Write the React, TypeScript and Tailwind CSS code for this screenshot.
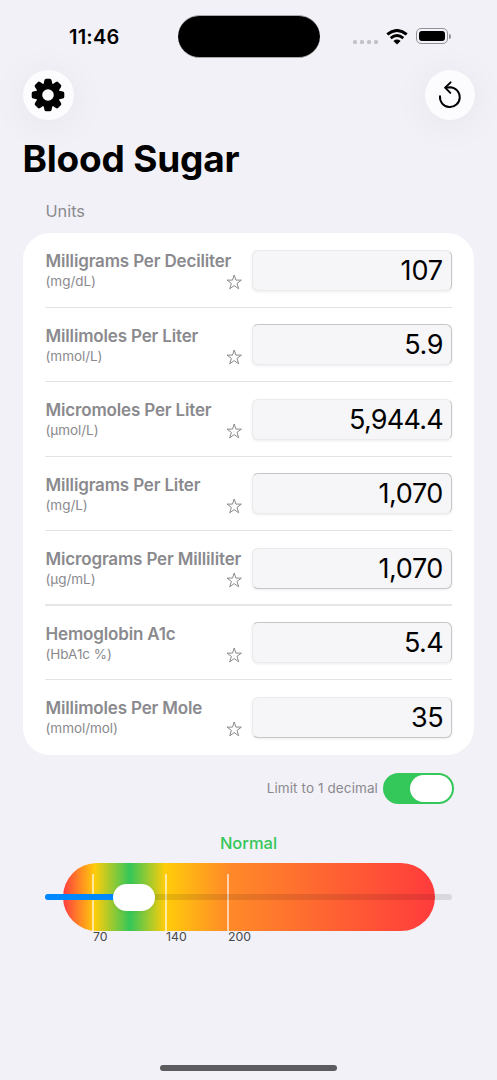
import React from "react";

type Unit = {
  name: string;
  symbol: string;
  value: string;
  tracking: string;
  edge: string;
  divider: string;
};

const units: Unit[] = [
  {
    name: "Milligrams Per Deciliter",
    symbol: "(mg/dL)",
    value: "107",
    tracking: "tracking-[-0.1px]",
    edge: "",
    divider: "border-b border-[#e3e3e5]",
  },
  {
    name: "Millimoles Per Liter",
    symbol: "(mmol/L)",
    value: "5.9",
    tracking: "tracking-[-0.4px]",
    edge: "border-t-[#c6c6c8]",
    divider: "border-b border-[#e3e3e5]",
  },
  {
    name: "Micromoles Per Liter",
    symbol: "(µmol/L)",
    value: "5,944.4",
    tracking: "tracking-[-0.75px]",
    edge: "",
    divider: "border-b border-[#e3e3e5]",
  },
  {
    name: "Milligrams Per Liter",
    symbol: "(mg/L)",
    value: "1,070",
    tracking: "tracking-[-0.4px]",
    edge: "border-t-[#c6c6c8]",
    divider: "border-b border-[#e3e3e5]",
  },
  {
    name: "Micrograms Per Milliliter",
    symbol: "(µg/mL)",
    value: "1,070",
    tracking: "tracking-[-0.4px]",
    edge: "border-b-[#c6c6c8]",
    divider: "border-b-2 border-[#e6e6e8]",
  },
  {
    name: "Hemoglobin A1c",
    symbol: "(HbA1c %)",
    value: "5.4",
    tracking: "tracking-[-0.6px]",
    edge: "border-t-[#c6c6c8]",
    divider: "border-b border-[#e3e3e5]",
  },
  {
    name: "Millimoles Per Mole",
    symbol: "(mmol/mol)",
    value: "35",
    tracking: "tracking-[-0.6px]",
    edge: "border-b-[#c6c6c8]",
    divider: "",
  },
];

const marks = [
  { label: "70", x: 29 },
  { label: "140", x: 102 },
  { label: "200", x: 164 },
];

function GearIcon() {
  return (
    <svg className="-ml-px" width="34" height="34" viewBox="-17 -17 34 34">
      {[0, 45, 90, 135, 180, 225, 270, 315].map((angle) => (
        <path
          key={angle}
          d="M-4.6 -10 L-3.6 -14.8 Q-3.3 -16.3 -1.8 -16.3 H1.8 Q3.3 -16.3 3.6 -14.8 L4.6 -10 Z"
          transform={`rotate(${angle})`}
        />
      ))}
      <circle r="8.9" fill="none" stroke="black" strokeWidth="6.2" />
    </svg>
  );
}

function ResetIcon() {
  return (
    <svg
      width="26"
      height="30"
      viewBox="0 0 26 30"
      fill="none"
      stroke="black"
      strokeWidth="2"
      strokeLinecap="round"
      strokeLinejoin="round"
    >
      <path d="M3 16.2A9.9 9.9 0 1 0 13 7.3L8.5 7.7" />
      <path d="M13.6 2.4L8.2 7.6L13.3 12.9" />
    </svg>
  );
}

function WifiIcon() {
  return (
    <svg width="22" height="16" viewBox="0 0 22 16" fill="none" stroke="black">
      <path d="M1.3 5.4Q11 -2.4 20.7 5.4" strokeWidth="3" />
      <path d="M4.7 9.1Q11 4 17.3 9.1" strokeWidth="2.8" />
      <path d="M11 15.6L7.4 12Q11 9.2 14.6 12Z" fill="black" stroke="none" />
    </svg>
  );
}

function StarIcon() {
  return (
    <svg width="16" height="16" viewBox="0 0 16 16" fill="none" stroke="#8a8a8e" strokeWidth="1">
      <path
        d="M8.2 1L9.9 6.1L15.4 6.1L11 9.4L12.7 14.8L8.2 11.6L3.7 14.8L5.4 9.4L1 6.1L6.5 6.1Z"
        strokeLinejoin="round"
      />
    </svg>
  );
}

function StatusBar() {
  return (
    <div className="flex h-[70px] pt-[15px]">
      <div className="w-[177.5px] pl-[69px] pt-[8px] text-[20px] leading-7 font-semibold tracking-[0.2px]">
        11:46
      </div>
      <div className="h-[43px] w-[142px] rounded-full border-y border-[#aaa] bg-black" />
      <div className="flex pl-[33.5px]">
        <div className="flex gap-[3px] pt-[25px]">
          {[0, 1, 2, 3].map((dot) => (
            <div key={dot} className="h-1 w-1 rounded-[1.5px] bg-[#c3c2c7]" />
          ))}
        </div>
        <div className="pl-[8px] pt-[13.5px]">
          <WifiIcon />
        </div>
        <div className="flex items-start pl-[8px] pt-[13px]">
          <div className="h-4 w-8 rounded-[5px] border border-[#929196] p-[2px]">
            <div className="h-full rounded-[3px] bg-black" />
          </div>
          <div className="ml-px mt-[5.5px] h-[5px] w-[2px] rounded-r-full bg-[#929196]" />
        </div>
      </div>
    </div>
  );
}

function UnitRow({ unit }: { unit: Unit }) {
  return (
    <div className={`mx-[22px] flex h-[74.5px] pt-[17px] ${unit.divider}`}>
      <div className="w-[207px] text-[#8a8a8e]">
        <div className="whitespace-nowrap pl-[0.5px] text-[17px] leading-[22px] font-semibold tracking-[-0.16px]">
          {unit.name}
        </div>
        <div className="flex justify-between pr-[10px]">
          <span className="pl-[0.5px] text-[13.5px] leading-[19px] tracking-[-0.05px]">
            {unit.symbol}
          </span>
          <span className="pt-[2px]">
            <StarIcon />
          </span>
        </div>
      </div>
      <div
        className={`-mt-[0.5px] h-[41px] w-[200px] rounded-[6px] border border-[#ebebed] border-r-[#c6c6c8] bg-[#f6f6f8] pr-[8px] text-right shadow-[0_1px_3px_rgba(0,0,0,0.08)] ${unit.edge}`}
      >
        <span className={`text-[27px] leading-[40px] ${unit.tracking}`}>{unit.value}</span>
      </div>
    </div>
  );
}

function RangeGauge() {
  return (
    <div className="relative mt-[9px] h-[84px]">
      <div className="ml-[62.5px] h-[68px] w-[372px] rounded-[34px] bg-[linear-gradient(90deg,#ff3b40_0%,#ffcc0a_8.5%,#34c759_18%,#ffcc0a_27.5%,#ff8a28_44.5%,#ff3b3c_100%)]" />
      {marks.map((mark) => (
        <React.Fragment key={mark.label}>
          <div
            className="absolute top-[11px] h-[57px] w-[1.5px] bg-white/60"
            style={{ left: 63 + mark.x }}
          />
          <div
            className="absolute top-[66px] text-[12.3px] leading-4 text-[#48484a]"
            style={{ left: 64 + mark.x }}
          >
            {mark.label}
          </div>
        </React.Fragment>
      ))}
      <div className="absolute left-[45px] top-[31px] h-[6px] w-[407px] rounded-full bg-black/10">
        <div className="h-full w-[88px] rounded-full bg-[#0088ff]" />
      </div>
      <div className="absolute left-[113px] top-[21px] h-[27px] w-[42px] rounded-full bg-white shadow-[0_1px_4px_rgba(0,0,0,0.06)]" />
    </div>
  );
}

export default function App() {
  return (
    <div className="flex h-[1080px] w-[497px] flex-col overflow-hidden bg-[#f2f1f7] font-[Inter,sans-serif] text-black">
      <StatusBar />
      <div className="flex justify-between pl-[23px] pr-[22.5px]">
        <button className="flex h-[50px] w-[51px] items-center justify-center rounded-full bg-[#fcfcff] shadow-[0_4px_40px_rgba(0,0,0,0.06)]">
          <GearIcon />
        </button>
        <button className="flex h-[50px] w-[50px] items-center justify-center rounded-full bg-[#fcfcff] shadow-[0_4px_40px_rgba(0,0,0,0.06)]">
          <ResetIcon />
        </button>
      </div>

      <h1 className="mt-[16px] pl-[22.5px] text-[37px] leading-[46px] font-bold tracking-[-0.22px]">
        Blood Sugar
      </h1>
      <h2 className="mt-[18px] h-[33px] pl-[45.5px] text-[16.3px] leading-[22px] text-[#8a8a8e]">
        Units
      </h2>

      <div className="mx-[23px] h-[521.5px] shrink-0 rounded-[27px] bg-white">
        {units.map((unit) => (
          <UnitRow key={unit.name} unit={unit} />
        ))}
      </div>

      <div className="mt-[18.5px] flex h-[31px] items-center justify-end pr-[43px]">
        <span className="text-[13.5px] tracking-[0.1px] text-[#8a8a8e]">Limit to 1 decimal</span>
        <button className="ml-[5px] flex h-[31px] w-[71px] justify-end rounded-full bg-[#34c759] p-[2px]">
          <span className="h-[27px] w-[42px] rounded-full bg-white" />
        </button>
      </div>

      <div className="mt-[28px] text-center text-[16.5px] leading-[22px] font-medium text-[#34c759]">
        Normal
      </div>
      <RangeGauge />

      <div className="mx-auto mt-auto mb-[9px] h-[6px] w-[177px] rounded-full bg-[#5c5c5e]" />
    </div>
  );
}
